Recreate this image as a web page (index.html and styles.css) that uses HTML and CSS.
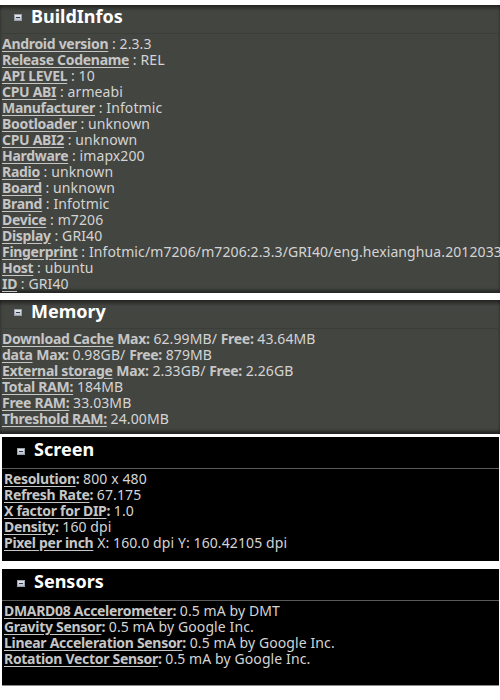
FILE: index.html
```html
<!DOCTYPE html>
<html lang="en">
<head>
    <meta charset="UTF-8">
    <meta name="viewport" content="width=device-width, initial-scale=1.0">
    <title>Device Infos</title>
    <link rel="stylesheet" href="styles.css">
</head>
<body>
    <!-- Build infos -->
    <section class="panel panel-gray panel-build">
        <h2 class="panel-title"><span class="toggle"></span>BuildInfos</h2>
        <ul class="rows">
            <li><span class="key">Android version</span> : 2.3.3</li>
            <li><span class="key">Release Codename</span> : REL</li>
            <li><span class="key">API LEVEL</span> : 10</li>
            <li><span class="key">CPU ABI</span> : armeabi</li>
            <li><span class="key">Manufacturer</span> : Infotmic</li>
            <li><span class="key">Bootloader</span> : unknown</li>
            <li><span class="key">CPU ABI2</span> : unknown</li>
            <li><span class="key">Hardware</span> : imapx200</li>
            <li><span class="key">Radio</span> : unknown</li>
            <li><span class="key">Board</span> : unknown</li>
            <li><span class="key">Brand</span> : Infotmic</li>
            <li><span class="key">Device</span> : m7206</li>
            <li><span class="key">Display</span> : GRI40</li>
            <li><span class="key">Fingerprint</span> : Infotmic/m7206/m7206:2.3.3/GRI40/eng.hexianghua.20120331.</li>
            <li><span class="key">Host</span> : ubuntu</li>
            <li><span class="key">ID</span> : GRI40</li>
        </ul>
    </section>

    <!-- Memory -->
    <section class="panel panel-gray panel-memory">
        <h2 class="panel-title"><span class="toggle"></span>Memory</h2>
        <ul class="rows">
            <li><span class="key">Download Cache</span> <b>Max:</b> 62.99MB/ <b>Free:</b> 43.64MB</li>
            <li><span class="key">data</span> <b>Max:</b> 0.98GB/ <b>Free:</b> 879MB</li>
            <li><span class="key">External storage</span> <b>Max:</b> 2.33GB/ <b>Free:</b> 2.26GB</li>
            <li><span class="key">Total RAM:</span> 184MB</li>
            <li><span class="key">Free RAM:</span> 33.03MB</li>
            <li><span class="key">Threshold RAM:</span> 24.00MB</li>
        </ul>
    </section>

    <!-- Screen -->
    <section class="panel panel-black panel-screen">
        <h2 class="panel-title"><span class="toggle"></span>Screen</h2>
        <ul class="rows">
            <li><span class="key">Resolution</span><b>:</b> 800 x 480</li>
            <li><span class="key">Refresh Rate</span><b>:</b> 67.175</li>
            <li><span class="key">X factor for DIP</span><b>:</b> 1.0</li>
            <li><span class="key">Density</span><b>:</b> 160 dpi</li>
            <li><span class="key">Pixel per inch</span> X: 160.0 dpi Y: 160.42105 dpi</li>
        </ul>
    </section>

    <!-- Sensors -->
    <section class="panel panel-black panel-sensors">
        <h2 class="panel-title"><span class="toggle"></span>Sensors</h2>
        <ul class="rows">
            <li><span class="key">DMARD08 Accelerometer</span><b>:</b> 0.5 mA by DMT</li>
            <li><span class="key">Gravity Sensor</span><b>:</b> 0.5 mA by Google Inc.</li>
            <li><span class="key">Linear Acceleration Sensor</span><b>:</b> 0.5 mA by Google Inc.</li>
            <li><span class="key">Rotation Vector Sensor</span><b>:</b> 0.5 mA by Google Inc.</li>
        </ul>
    </section>
</body>
</html>
```

FILE: styles.css
```css
/* General */
body {
    margin: 0;
    padding-top: 5px;
    background: #ffffff;
    font-family: "Noto Sans", "Open Sans", sans-serif;
    font-size: 14px;
    letter-spacing: 0.1px;
    color: #d4d4d4;
    overflow: hidden;
}

/* Panels */
.panel {
    overflow: hidden;
}

.panel-gray {
    background: linear-gradient(#232422, #434541 6px);
    box-shadow: inset 0 -3px 3px rgba(0, 0, 0, 0.45);
}

.panel-black {
    background: #000000;
    margin: 0 1px 0 2px;
}

.panel-build { height: 288px; }
.panel-memory { margin-top: 7px; padding-bottom: 7px; }
.panel-screen { margin-top: 3px; padding-bottom: 10px; }
.panel-sensors {
    margin-top: 8px;
    padding-bottom: 18px;
    border-bottom: 1px solid #8a8a8a;
}

/* Header */
.panel-title {
    display: flex;
    align-items: center;
    height: 29px;
    margin: 0;
    padding: 0 0 7px 14px;
    box-sizing: border-box;
    font-size: 18px;
    font-weight: bold;
    letter-spacing: 0;
    color: #ffffff;
    border-bottom: 1px solid #3b3d39;
}

.panel-black .panel-title {
    height: 32px;
    padding-left: 15px;
    border-bottom-color: #5a5a5a;
}

.toggle {
    position: relative;
    width: 8px;
    height: 7px;
    margin: 4px 9px 0 0;
    background: linear-gradient(#e4e8ee, #b8c0cc);
    border: 1px solid #9aa2ac;
    box-sizing: border-box;
}

.toggle::after {
    content: "";
    position: absolute;
    left: 1px;
    right: 1px;
    top: 2px;
    height: 1px;
    background: #333a44;
}

/* Rows */
.rows {
    list-style: none;
    margin: 0;
    padding: 2px 0 0 2px;
}

.rows li {
    height: 16px;
    line-height: 16px;
    white-space: nowrap;
}

.key {
    font-weight: bold;
    letter-spacing: -0.3px;
    color: #c6c6c6;
    text-decoration: underline;
    text-underline-offset: 2px;
}

.rows b {
    letter-spacing: -0.3px;
    color: #c6c6c6;
}
```
